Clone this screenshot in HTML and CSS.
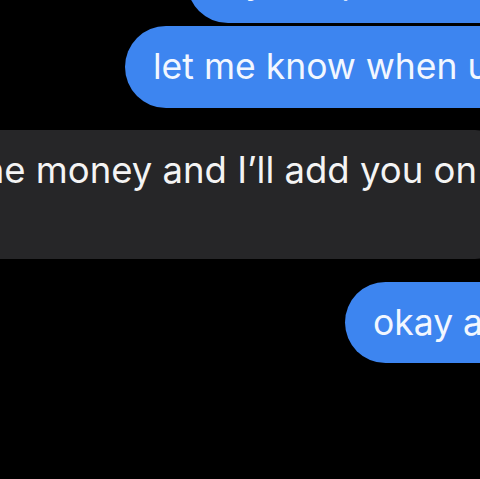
FILE: index.html
```html
<!DOCTYPE html>
<html>
<head>
<meta charset="utf-8">
<link rel="stylesheet" href="styles.css">
</head>
<body>
<div class="chat">
  <div class="bubble sent first"><span class="text">my bro paid it for you</span></div>
  <div class="bubble sent second"><span class="text">let me know when u get it</span></div>
  <div class="bubble received"><span class="text">send the money and I’ll add you on<br>snap</span></div>
  <div class="bubble sent third"><span class="text">okay awesome</span></div>
</div>
</body>
</html>
```
FILE: styles.css
```css
html, body {
  margin: 0;
  padding: 0;
  background: #000;
  overflow: hidden;
  width: 480px;
  height: 479px;
}
.chat {
  display: flex;
  flex-direction: column;
  align-items: flex-start;
  width: 1200px;
  font-family: "Inter", "Helvetica", sans-serif;
  font-size: 35.5px;
  line-height: 47px;
}
.bubble {
  box-sizing: border-box;
  white-space: nowrap;
  border-radius: 41px;
  padding: 17px 28px 18px 28px;
}
.sent {
  background: #3d85f0;
  color: #f2f7ff;
}
.received {
  background: #262628;
  color: #f4f4f4;
  border-radius: 30px;
  font-size: 36.5px;
}
.first {
  margin-top: -59px;
  margin-left: 187px;
  height: 82px;
}
.second {
  margin-top: 3px;
  margin-left: 125px;
  height: 82px;
}
.received {
  margin-top: 22px;
  margin-left: -152px;
  height: 129px;
}
.third {
  margin-top: 23px;
  margin-left: 345px;
  height: 81px;
}
```
